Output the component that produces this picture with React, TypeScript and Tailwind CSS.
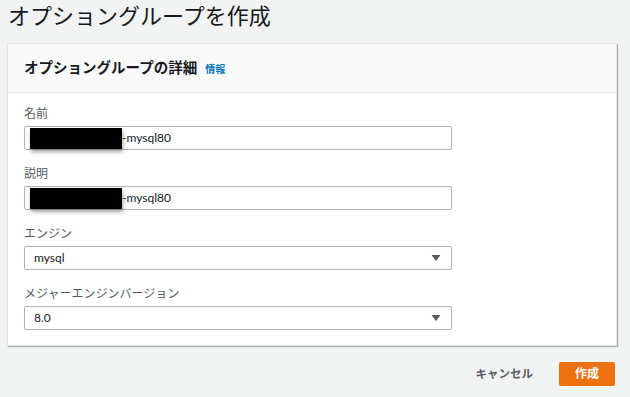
import React from "react";

const jp = { fontFamily: '"Noto Sans", "Noto Sans CJK JP", sans-serif' };
const latin = "font-['Lato','Noto_Sans_CJK_JP',sans-serif]";

function Caret() {
  return (
    <svg width="10" height="8" viewBox="0 0 10 8" className="shrink-0">
      <path d="M0.5 1 L9.5 1 L5 7 Z" fill="#545b64" />
    </svg>
  );
}

function TextField({ label, value }: { label: string; value: string }) {
  return (
    <div className="flex flex-col">
      <div className="h-4 text-[12px] leading-4 text-[#545b64]">{label}</div>
      <div className={`mt-1 flex h-6 w-[428px] items-center rounded-[2px] border border-[#aab7b8] bg-white pl-[5px] text-[12px] text-[#16191f] ${latin}`}>
        <span className="h-[21px] w-[92px] bg-black shadow-[1px_3px_4px_rgba(0,0,0,0.35)]" />
        <span>-{value}</span>
      </div>
    </div>
  );
}

function SelectField({ label, value }: { label: string; value: string }) {
  return (
    <div className="flex flex-col">
      <div className="h-4 text-[12px] leading-4 text-[#545b64]">{label}</div>
      <div className={`mt-1 flex h-6 w-[428px] items-center justify-between rounded-[2px] border border-[#aab7b8] bg-white pl-[9px] pr-[10px] text-[12px] text-[#16191f] ${latin}`}>
        <span>{value}</span>
        <Caret />
      </div>
    </div>
  );
}

export default function App() {
  return (
    <div className="h-[397px] w-[630px] overflow-hidden bg-[#f2f3f3]" style={jp}>
      <div className="flex h-[43px] items-start pl-[8px] pt-[1px] text-[22px] leading-[28px] text-[#16191f]">
        オプショングループを作成
      </div>
      <div className="ml-[7px] w-[610px] border border-[#e3e7e7] bg-white shadow-[1px_1px_1px_rgba(0,28,36,0.3)]">
        <div className="flex h-[49px] items-center gap-2 border-b border-[#eaeded] bg-[#fafafa] pl-[16px]">
          <span className="text-[14.5px] font-bold text-[#16191f]">オプショングループの詳細</span>
          <span className="mt-[2px] text-[10px] font-bold text-[#0073bb]">情報</span>
        </div>
        <div className="flex flex-col gap-4 px-4 pb-[15px] pt-[13px]">
          <TextField label="名前" value="mysql80" />
          <TextField label="説明" value="mysql80" />
          <SelectField label="エンジン" value="mysql" />
          <SelectField label="メジャーエンジンバージョン" value="8.0" />
        </div>
      </div>
      <div className="mt-[16px] flex items-center justify-end pr-[15px]">
        <span className="mr-[26px] text-[11.5px] font-bold text-[#545b64]">キャンセル</span>
        <div className="flex h-[24px] w-[56px] items-center justify-center rounded-[2px] bg-[#ec7211] text-[12px] font-bold text-white">
          作成
        </div>
      </div>
    </div>
  );
}
